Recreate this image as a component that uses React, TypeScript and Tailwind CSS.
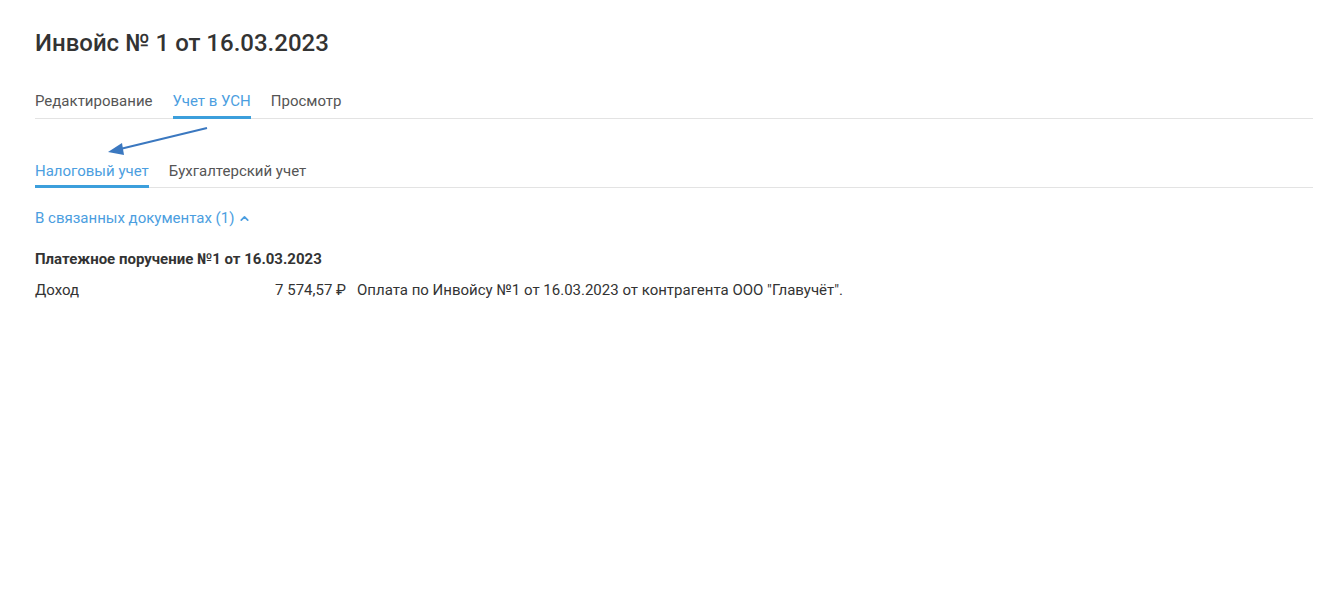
import { ChevronUp } from "lucide-react";

const topTabs = ["Редактирование", "Учет в УСН", "Просмотр"];
const subTabs = ["Налоговый учет", "Бухгалтерский учет"];

function Tabs({ items, active, className }: { items: string[]; active: number; className: string }) {
  return (
    <div className={"flex gap-[20px] border-b border-[#e3e3e3] text-[15px] " + className}>
      {items.map((t, i) => (
        <div
          key={t}
          className={
            i === active
              ? "-mb-px border-b-[3px] border-[#3c9fdc] pb-[3px] pt-[2px] text-[#4b9ee0]"
              : "-mb-px border-b-[3px] border-transparent pb-[3px] pt-[2px] text-[#555]"
          }
        >
          {t}
        </div>
      ))}
    </div>
  );
}

export default function App() {
  return (
    <div
      className="relative min-h-[612px] bg-white pl-[35px] pr-[31px] pt-[28px] text-[#333]"
      style={{ fontFamily: "Roboto, 'Noto Sans', sans-serif" }}
    >
      <h1 className="text-[24px] font-medium leading-[30px] text-[#333]">
        Инвойс № 1 от 16.03.2023
      </h1>

      <Tabs items={topTabs} active={1} className="mt-[30px]" />
      <Tabs items={subTabs} active={0} className="mt-[39px]" />

      <button className="mt-[19px] flex items-center gap-[4px] text-[15px] text-[#4b9ee0]">
        В связанных документах (1)
        <ChevronUp size={13} strokeWidth={3.2} />
      </button>

      <div className="mt-[18px] text-[15px] font-bold text-[#333]">
        Платежное поручение №1 от 16.03.2023
      </div>
      <div className="mt-[9px] flex text-[15px] text-[#333]">
        <div className="w-[200px]">Доход</div>
        <div className="w-[111px] text-right">7 574,57 ₽</div>
        <div className="ml-[11px]">
          Оплата по Инвойсу №1 от 16.03.2023 от контрагента ООО "Главучёт".
        </div>
      </div>

      {/* annotation arrow */}
      <svg
        className="pointer-events-none absolute left-[100px] top-[120px]"
        width="115"
        height="40"
        viewBox="0 0 115 40"
      >
        <line x1="107" y1="8" x2="16" y2="30" stroke="#3b78c0" strokeWidth="2" />
        <polygon points="8,32 22,23 24,35" fill="#3b78c0" />
      </svg>
    </div>
  );
}
